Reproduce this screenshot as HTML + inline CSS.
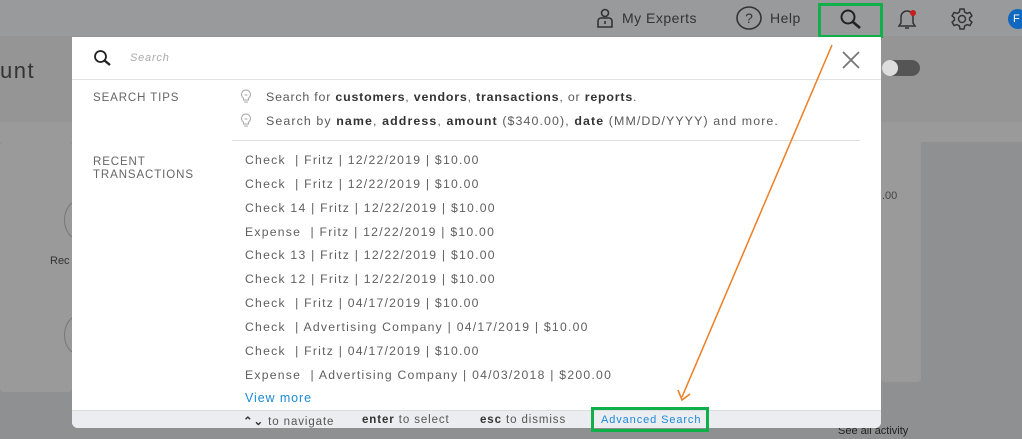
<!DOCTYPE html>
<html><head><meta charset="utf-8"><style>
*{margin:0;padding:0;box-sizing:border-box}
body{width:1022px;height:439px;overflow:hidden;background:#8f9092;font-family:"Liberation Sans",sans-serif;position:relative;color:#555}
.abs{position:absolute}
.top{left:0;top:0;width:1022px;height:36px;background:#999a9b}
.hdr{left:0;top:36px;width:1022px;height:86px;background:#959596}
.sub{left:0;top:122px;width:1022px;height:20px;background:#9a9a9b}
.card{background:#9a9a9b;border-radius:4px}
.modal{left:72px;top:37px;width:809px;height:391px;background:#fff;border-radius:0 0 6px 6px;overflow:hidden}
.t{font-size:12.4px;color:#5a5a5a;white-space:nowrap}
.lbl{font-size:11.5px;color:#666;letter-spacing:.9px;line-height:13px}
b{color:#333;font-weight:bold}
.row{left:173px;font-size:12.2px;letter-spacing:1.25px;color:#5f5f5f;white-space:nowrap}
.f{top:377px;font-size:11.5px;color:#555;letter-spacing:.9px;white-space:nowrap}
</style></head><body>
<div class="abs top"></div>
<div class="abs hdr"></div>
<div class="abs sub"></div>
<div class="abs" style="left:0;top:58px;font-size:22px;color:#333;letter-spacing:1.5px">unt</div>
<div class="abs card" style="left:0;top:142px;width:72px;height:250px"></div>
<div class="abs card" style="left:881px;top:140px;width:40px;height:242px"></div>
<div class="abs" style="left:50px;top:255px;font-size:11px;color:#333">Rec</div>
<div class="abs" style="left:64px;top:200px;width:30px;height:40px;border:1.5px solid #777;border-radius:50%"></div>
<div class="abs" style="left:64px;top:315px;width:30px;height:40px;border:1.5px solid #777;border-radius:50%"></div>
<div class="abs" style="left:882px;top:190px;font-size:11px;color:#444">.00</div>
<div class="abs" style="left:838px;top:425px;font-size:11px;color:#222">See all activity</div>
<div class="abs" style="left:882px;top:60px;width:38px;height:16px;border-radius:8px;background:#555"></div>
<div class="abs" style="left:882px;top:60px;width:16px;height:16px;border-radius:50%;background:#ddd"></div>
<svg class="abs" style="left:596px;top:8px" width="18" height="20" viewBox="0 0 18 20" fill="none" stroke="#333" stroke-width="1.6"><circle cx="9" cy="5" r="3.5"/><path d="M2 19v-6a3 3 0 0 1 3-3h8a3 3 0 0 1 3 3v6z M9 13v3"/></svg>
<div class="abs" style="left:622px;top:10px;font-size:14px;color:#333;letter-spacing:.5px">My Experts</div>
<svg class="abs" style="left:736px;top:6px" width="26" height="24" viewBox="0 0 26 24"><ellipse cx="13" cy="12" rx="12" ry="11" fill="none" stroke="#333" stroke-width="1.6"/><text x="13" y="17" font-size="14" text-anchor="middle" fill="#333" font-family="Liberation Sans">?</text></svg>
<div class="abs" style="left:770px;top:10px;font-size:14px;color:#333;letter-spacing:.5px">Help</div>
<div class="abs" style="left:818px;top:3px;width:65px;height:35px;border:3px solid #0fb04a"></div>
<svg class="abs" style="left:839px;top:8px" width="24" height="22" viewBox="0 0 24 22" fill="none" stroke="#222" stroke-width="2"><circle cx="9" cy="9" r="6.5"/><path d="M14 14l7 6" stroke-width="2.6"/></svg>
<svg class="abs" style="left:896px;top:8px" width="24" height="22" viewBox="0 0 24 22" fill="none" stroke="#333" stroke-width="1.5"><path d="M3 18h16l-2-3v-6a6 6 0 0 0-12 0v6z M9 20h4"/><circle cx="17" cy="5" r="3" fill="#c81e1e" stroke="none"/></svg>
<svg class="abs" style="left:950px;top:7px" width="24" height="24" viewBox="0 0 24 24" fill="none" stroke="#333" stroke-width="1.5"><circle cx="12" cy="12" r="3.5"/><path d="M10 2h4l.6 3 2.4 1.4 2.9-1 2 3.4-2.3 2v2.4l2.3 2-2 3.4-2.9-1-2.4 1.4-.6 3h-4l-.6-3-2.4-1.4-2.9 1-2-3.4 2.3-2v-2.4l-2.3-2 2-3.4 2.9 1 2.4-1.4z"/></svg>
<div class="abs" style="left:1008px;top:9px;width:20px;height:20px;border-radius:50%;background:#1068c0;color:#fff;font-size:11px;padding:4px 0 0 5px">F</div>
<div class="abs modal">
  <svg class="abs" style="left:21px;top:12px" width="20" height="18" viewBox="0 0 20 18" fill="none" stroke="#222" stroke-width="1.8"><circle cx="7.5" cy="7.5" r="5.5"/><path d="M11.5 11.5l5.5 4.5" stroke-width="2.4"/></svg>
  <div class="abs" style="left:58px;top:15px;font-size:11px;font-style:italic;color:#aaa;letter-spacing:.8px">Search</div>
  <svg class="abs" style="left:770px;top:14px" width="18" height="18" viewBox="0 0 18 18" stroke="#777" stroke-width="1.8"><path d="M1 1l16 16M17 1L1 17"/></svg>
  <div class="abs" style="left:0;top:42px;width:809px;height:1px;background:#e3e3e3"></div>
  <div class="abs lbl" style="left:21px;top:55px">SEARCH TIPS</div>
  <div class="abs lbl" style="left:21px;top:119px">RECENT<br>TRANSACTIONS</div>
  <svg class="abs" style="left:168px;top:52px" width="12" height="14" viewBox="0 0 12 14" fill="none" stroke="#aaa" stroke-width="1.1"><path d="M6 1a4.5 4.5 0 0 0-2.5 8.2V11h5V9.2A4.5 4.5 0 0 0 6 1zM4 13h4M4.5 6h3"/></svg>
  <svg class="abs" style="left:168px;top:76px" width="12" height="14" viewBox="0 0 12 14" fill="none" stroke="#aaa" stroke-width="1.1"><path d="M6 1a4.5 4.5 0 0 0-2.5 8.2V11h5V9.2A4.5 4.5 0 0 0 6 1zM4 13h4M4.5 6h3"/></svg>
  <div class="abs t" style="left:194px;top:53px;letter-spacing:.8px">Search for <b>customers</b>, <b>vendors</b>, <b>transactions</b>, or <b>reports</b>.</div>
  <div class="abs t" style="left:194px;top:77px;letter-spacing:1.1px">Search by <b>name</b>, <b>address</b>, <b>amount</b> ($340.00), <b>date</b> (MM/DD/YYYY) and more.</div>
  <div class="abs" style="left:160px;top:103px;width:628px;height:1px;background:#e0e0e0"></div>
  <div class="abs row" style="top:116px">Check &nbsp;| Fritz | 12/22/2019 | $10.00</div>
  <div class="abs row" style="top:140px">Check &nbsp;| Fritz | 12/22/2019 | $10.00</div>
  <div class="abs row" style="top:164px">Check 14 | Fritz | 12/22/2019 | $10.00</div>
  <div class="abs row" style="top:188px">Expense &nbsp;| Fritz | 12/22/2019 | $10.00</div>
  <div class="abs row" style="top:211px">Check 13 | Fritz | 12/22/2019 | $10.00</div>
  <div class="abs row" style="top:235px">Check 12 | Fritz | 12/22/2019 | $10.00</div>
  <div class="abs row" style="top:259px">Check &nbsp;| Fritz | 04/17/2019 | $10.00</div>
  <div class="abs row" style="top:283px">Check &nbsp;| Advertising Company | 04/17/2019 | $10.00</div>
  <div class="abs row" style="top:307px">Check &nbsp;| Fritz | 04/17/2019 | $10.00</div>
  <div class="abs row" style="top:331px">Expense &nbsp;| Advertising Company | 04/03/2018 | $200.00</div>
  <div class="abs" style="left:173px;top:354px;font-size:12.5px;color:#1a8bd6;letter-spacing:.9px">View more</div>
  <div class="abs" style="left:0;top:373px;width:809px;height:18px;background:#ecedf0;border-top:1px solid #dcdde0"></div>
  <div class="abs f" style="left:171px"><b style="color:#333">⌃⌄</b> to navigate</div>
  <div class="abs f" style="left:290px"><b style="color:#333">enter</b> to select</div>
  <div class="abs f" style="left:408px"><b style="color:#333">esc</b> to dismiss</div>
  <div class="abs" style="left:529px;top:377px;font-size:11px;color:#1a8bd6;letter-spacing:.9px">Advanced Search</div>
</div>
<div class="abs" style="left:591px;top:407px;width:118px;height:25px;border:3px solid #0fb04a"></div>
<svg class="abs" style="left:0;top:0" width="1022" height="439"><path d="M832 45L682 397" stroke="#ef7d22" stroke-width="1.5" fill="none"/><path d="M678 390L682 400L690 394" stroke="#ef7d22" stroke-width="1.6" fill="none"/></svg>
</body></html>
